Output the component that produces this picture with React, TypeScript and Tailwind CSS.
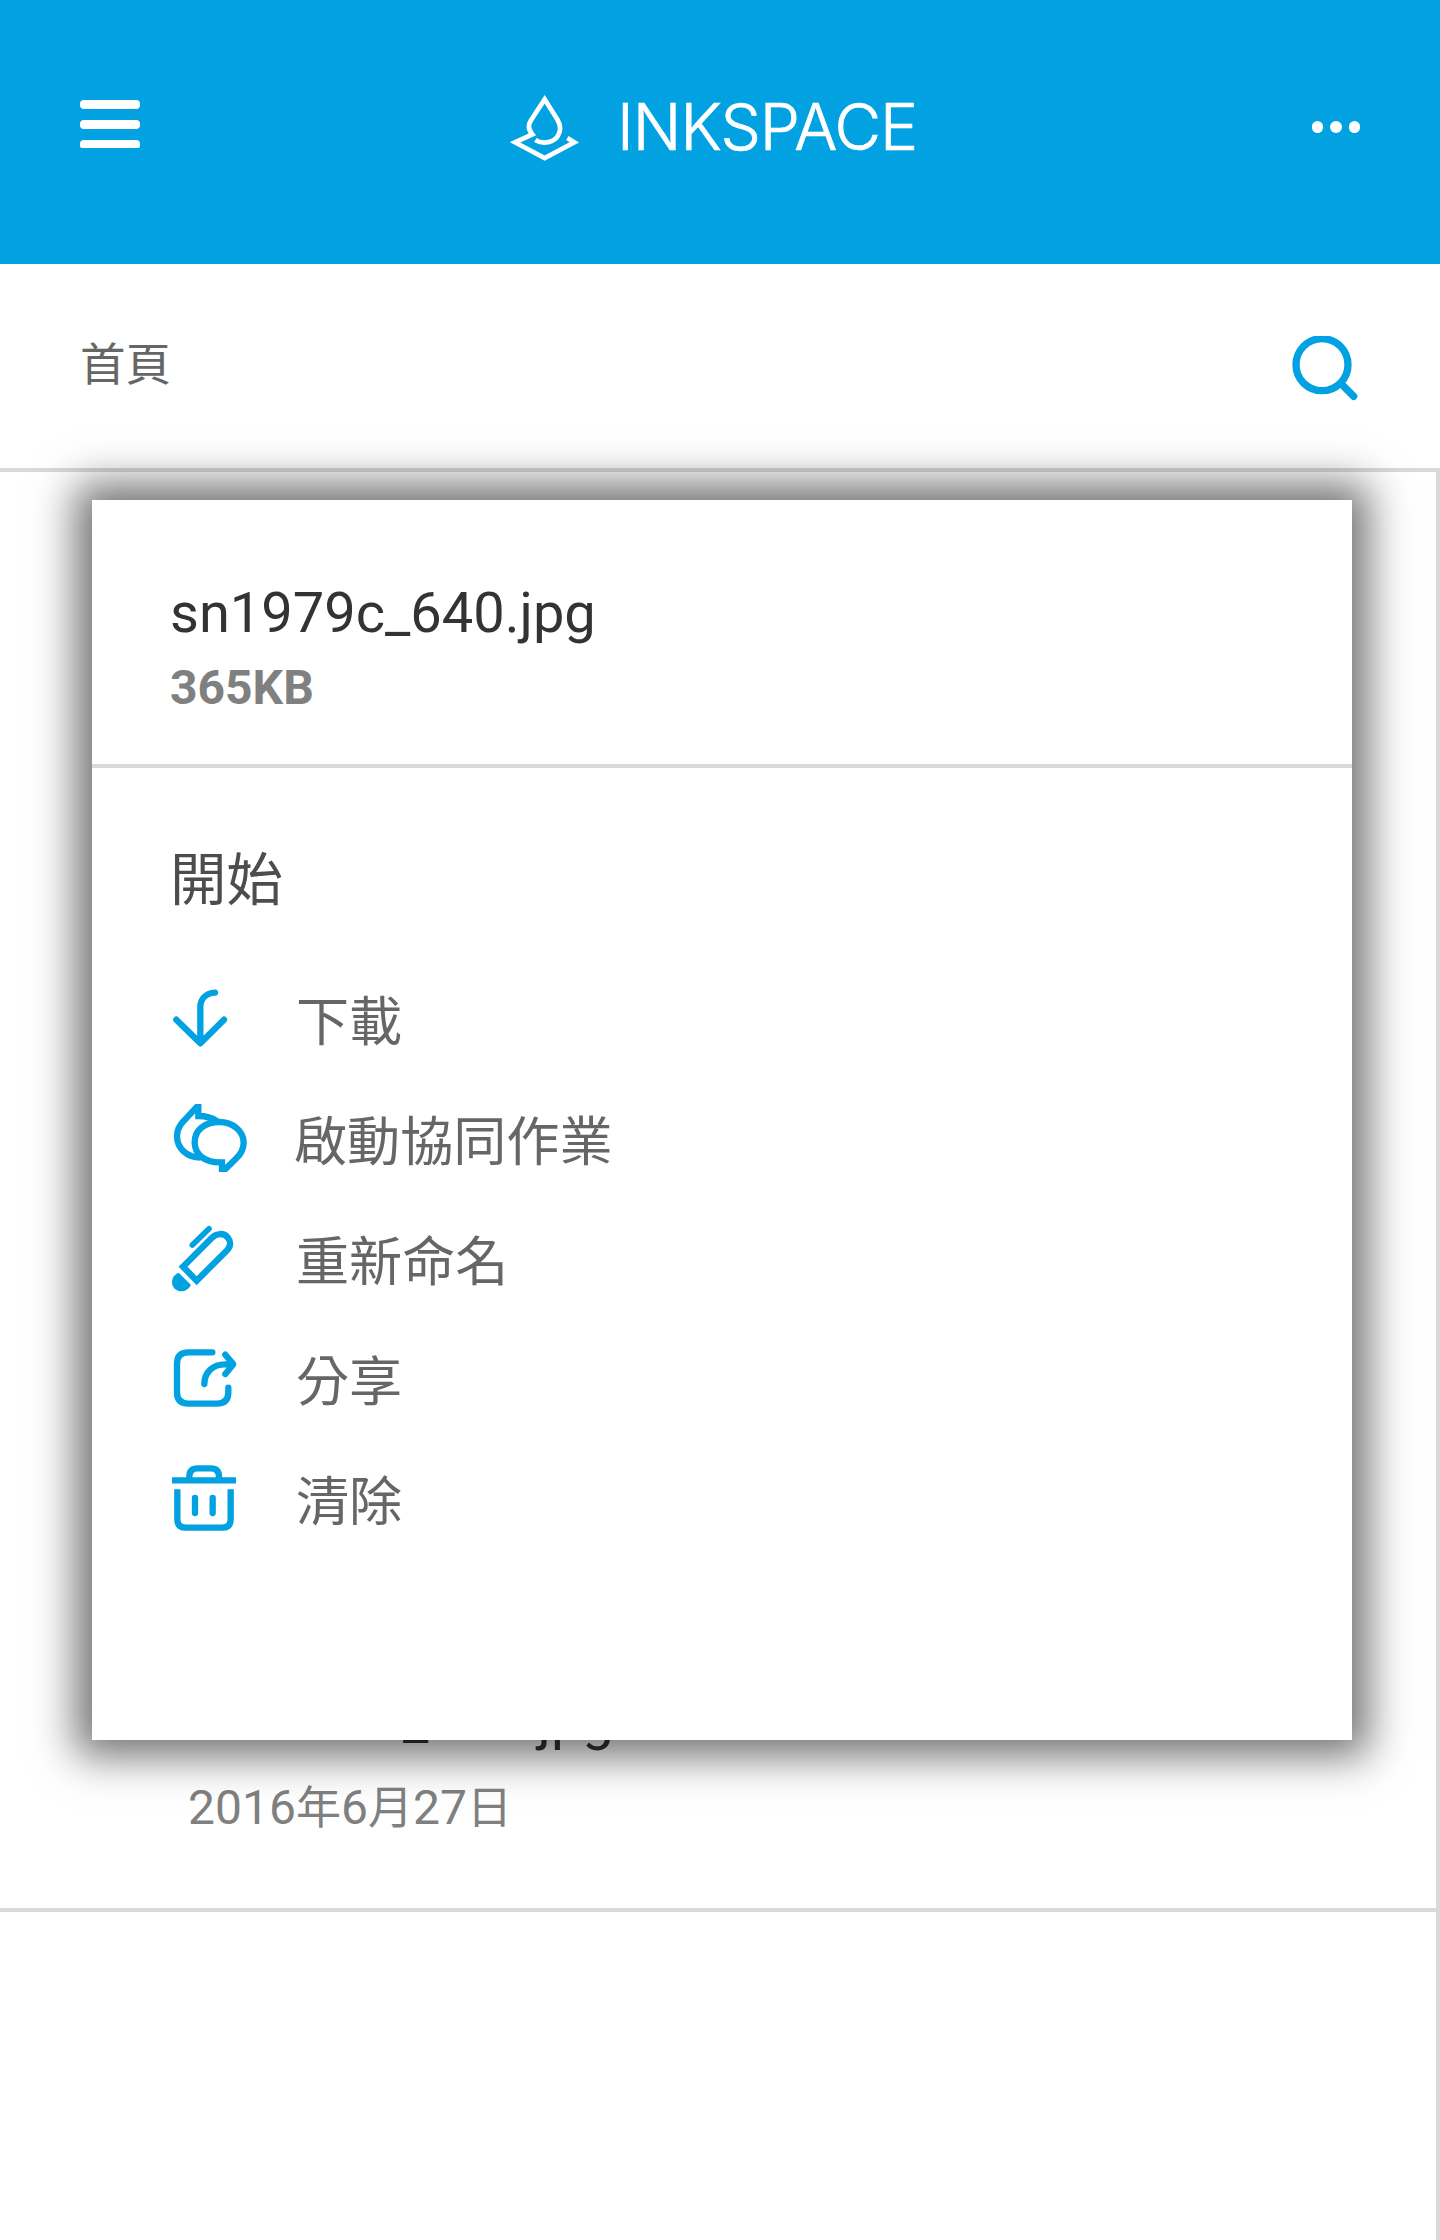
import type { ReactNode } from "react";

const latin = "font-['Roboto','Noto_Sans_CJK_TC',sans-serif]";
const cjk = "font-['Noto_Sans_CJK_TC',sans-serif]";

function Logo() {
  return (
    <svg viewBox="60 42 210 210" className="h-[70px] w-[70px]" fill="none" stroke="#fff" strokeWidth="14">
      <path d="M232 174L253 187L164 234L75 187L127 163C114 148 114 135 122 122L164 58L203 120C212 136 212 152 205 165C194 188 158 194 136 180" />
    </svg>
  );
}

function Header() {
  return (
    <header className="flex h-[264px] items-start bg-[#02a2e2] px-20">
      <div className="mt-[100px] flex w-[60px] flex-col gap-[11px]">
        <span className="h-[9px] rounded-[4px] bg-white" />
        <span className="h-[9px] rounded-[4px] bg-white" />
        <span className="h-[8px] rounded-t-[4px] rounded-b-[2px] bg-white" />
      </div>
      <div className="mt-[94px] ml-[370px] flex items-start">
        <Logo />
        <span className="ml-[37px] text-[64px] leading-[66px] font-light tracking-[-1px] text-white [-webkit-text-stroke:0.7px_white] font-['Inter',sans-serif]">
          INKSPACE
        </span>
      </div>
      <div className="mt-[121px] ml-auto flex gap-[7px]">
        <span className="size-[11.5px] rounded-full bg-white" />
        <span className="size-[11.5px] rounded-full bg-white" />
        <span className="size-[11.5px] rounded-full bg-white" />
      </div>
    </header>
  );
}

function Breadcrumb() {
  return (
    <div className="flex h-[208px] items-start justify-between border-b-4 border-[#d9d9d9] px-20">
      <span className={`${cjk} mt-[67px] text-[45.5px] leading-[60px] text-[#666]`}>首頁</span>
      <svg viewBox="66 768 198 198" className="mt-[72px] mr-[2px] h-[66px] w-[66px]" fill="none" stroke="#02a2e2" strokeWidth="22">
        <circle cx="156" cy="854" r="78" />
        <path d="M213 911L251 949" strokeLinecap="round" />
      </svg>
    </div>
  );
}

const icons: Record<string, { box: string; art: ReactNode }> = {
  download: {
    box: "30 -39 372 360",
    art: (
      <path d="M165 68C138 70 121 86 121 112V218M49 149L121 220L192 149" strokeLinecap="round" strokeLinejoin="round" />
    ),
  },
  collab: {
    box: "30 321 372 360",
    art: (
      <>
        <clipPath id="bubbles">
          <rect x="30" y="402" width="240" height="204" />
        </clipPath>
        <g clipPath="url(#bubbles)">
          <path d="M186 577C130 579 104 550 104 517C104 480 135 456 177 456C220 456 251 485 251 518C251 540 241 554 227 567L186 607V568" />
          <path d="M122 563C80 562 51 535 51 498C51 476 60 464 73 451L115 406V438C140 438 156 443 172 454" />
        </g>
      </>
    ),
  },
  rename: {
    box: "30 -39 372 360",
    art: (
      <>
        <path d="M97 105L147 56" strokeWidth="17" strokeLinecap="round" />
        <path d="M69 170L155 84C170 69 191 68 203 82C214 95 212 110 200 122L110 212Z" />
        <path d="M56 188L93 225C86 238 76 244 64 244C48 244 36 232 36 216C36 203 45 192 56 188Z" fill="#02a2e2" stroke="none" />
      </>
    ),
  },
  share: {
    box: "30 321 372 360",
    art: (
      <>
        <path d="M157 427H85Q51 427 51 461V547Q51 581 85 581H171Q205 581 205 547V533" strokeLinecap="round" />
        <path d="M133 522C133 485 160 463 195 463H219M196 434L220 463L196 492" strokeLinecap="round" strokeLinejoin="round" />
      </>
    ),
  },
  trash: {
    box: "30 -9 372 360",
    art: (
      <>
        <path d="M36 121H228" />
        <path d="M88 114V110Q88 85 113 85H152Q177 85 177 110V114" />
        <path d="M52 148V238Q52 263 77 263H187Q212 263 212 238V148" />
        <path d="M105 174V219M158 174V219" strokeLinecap="round" />
      </>
    ),
  },
};

const actions = [
  { icon: "download", label: "下載", pad: "pl-[2px]" },
  { icon: "collab", label: "啟動協同作業", pad: "pl-0" },
  { icon: "rename", label: "重新命名", pad: "pl-[2px]" },
  { icon: "share", label: "分享", pad: "pl-[2px]" },
  { icon: "trash", label: "清除", pad: "pl-[2px]" },
];

function FileMenu() {
  return (
    <section className="absolute top-[500px] left-[92px] h-[1240px] w-[1260px] bg-white shadow-[0_0_40px_16px_rgba(0,0,0,0.56)]">
      <div className="h-[268px] border-b-4 border-[#d9d9d9] px-[78px] pt-[81px]">
        <h2 className={`${latin} text-[56px] leading-[64px] text-[#333]`}>sn1979c_640.jpg</h2>
        <p className={`${latin} mt-[15px] text-[48px] leading-[56px] font-bold text-[#808080]`}>365KB</p>
      </div>
      <div className="px-[78px] pt-[67px]">
        <h3 className={`${cjk} text-[56.5px] leading-[80px] text-[#4d4d4d]`}>開始</h3>
        <ul className="mt-[42px]">
          {actions.map((a) => (
            <li key={a.icon} className="flex h-[120px] items-center">
              <svg viewBox={icons[a.icon].box} className="h-[120px] w-[124px]" fill="none" stroke="#02a2e2" strokeWidth="19">
                {icons[a.icon].art}
              </svg>
              <span className={`${cjk} ${a.pad} pt-[2px] text-[53.1px] leading-[80px] text-[#666]`}>{a.label}</span>
            </li>
          ))}
        </ul>
      </div>
    </section>
  );
}

function FileList() {
  return (
    <main className="flex-1 border-r-4 border-[#d9d9d9]">
      <div className="flex h-[1440px] flex-col justify-end border-b-4 border-[#d9d9d9] pb-[72px] pl-[188px]">
        <p className={`${latin} text-[56px] leading-[64px] text-[#333]`}>sn1979c_640.jpg</p>
        <p className={`${latin} mt-[28px] text-[48px] leading-[56px] text-[#808080]`}>
          2016<span className="text-[45px] leading-none">年</span>6<span className="text-[45px] leading-none">月</span>27
          <span className="text-[45px] leading-none">日</span>
        </p>
      </div>
    </main>
  );
}

export default function App() {
  return (
    <div className="relative flex h-[2240px] w-[1440px] flex-col overflow-hidden bg-white">
      <Header />
      <Breadcrumb />
      <FileList />
      <FileMenu />
    </div>
  );
}
